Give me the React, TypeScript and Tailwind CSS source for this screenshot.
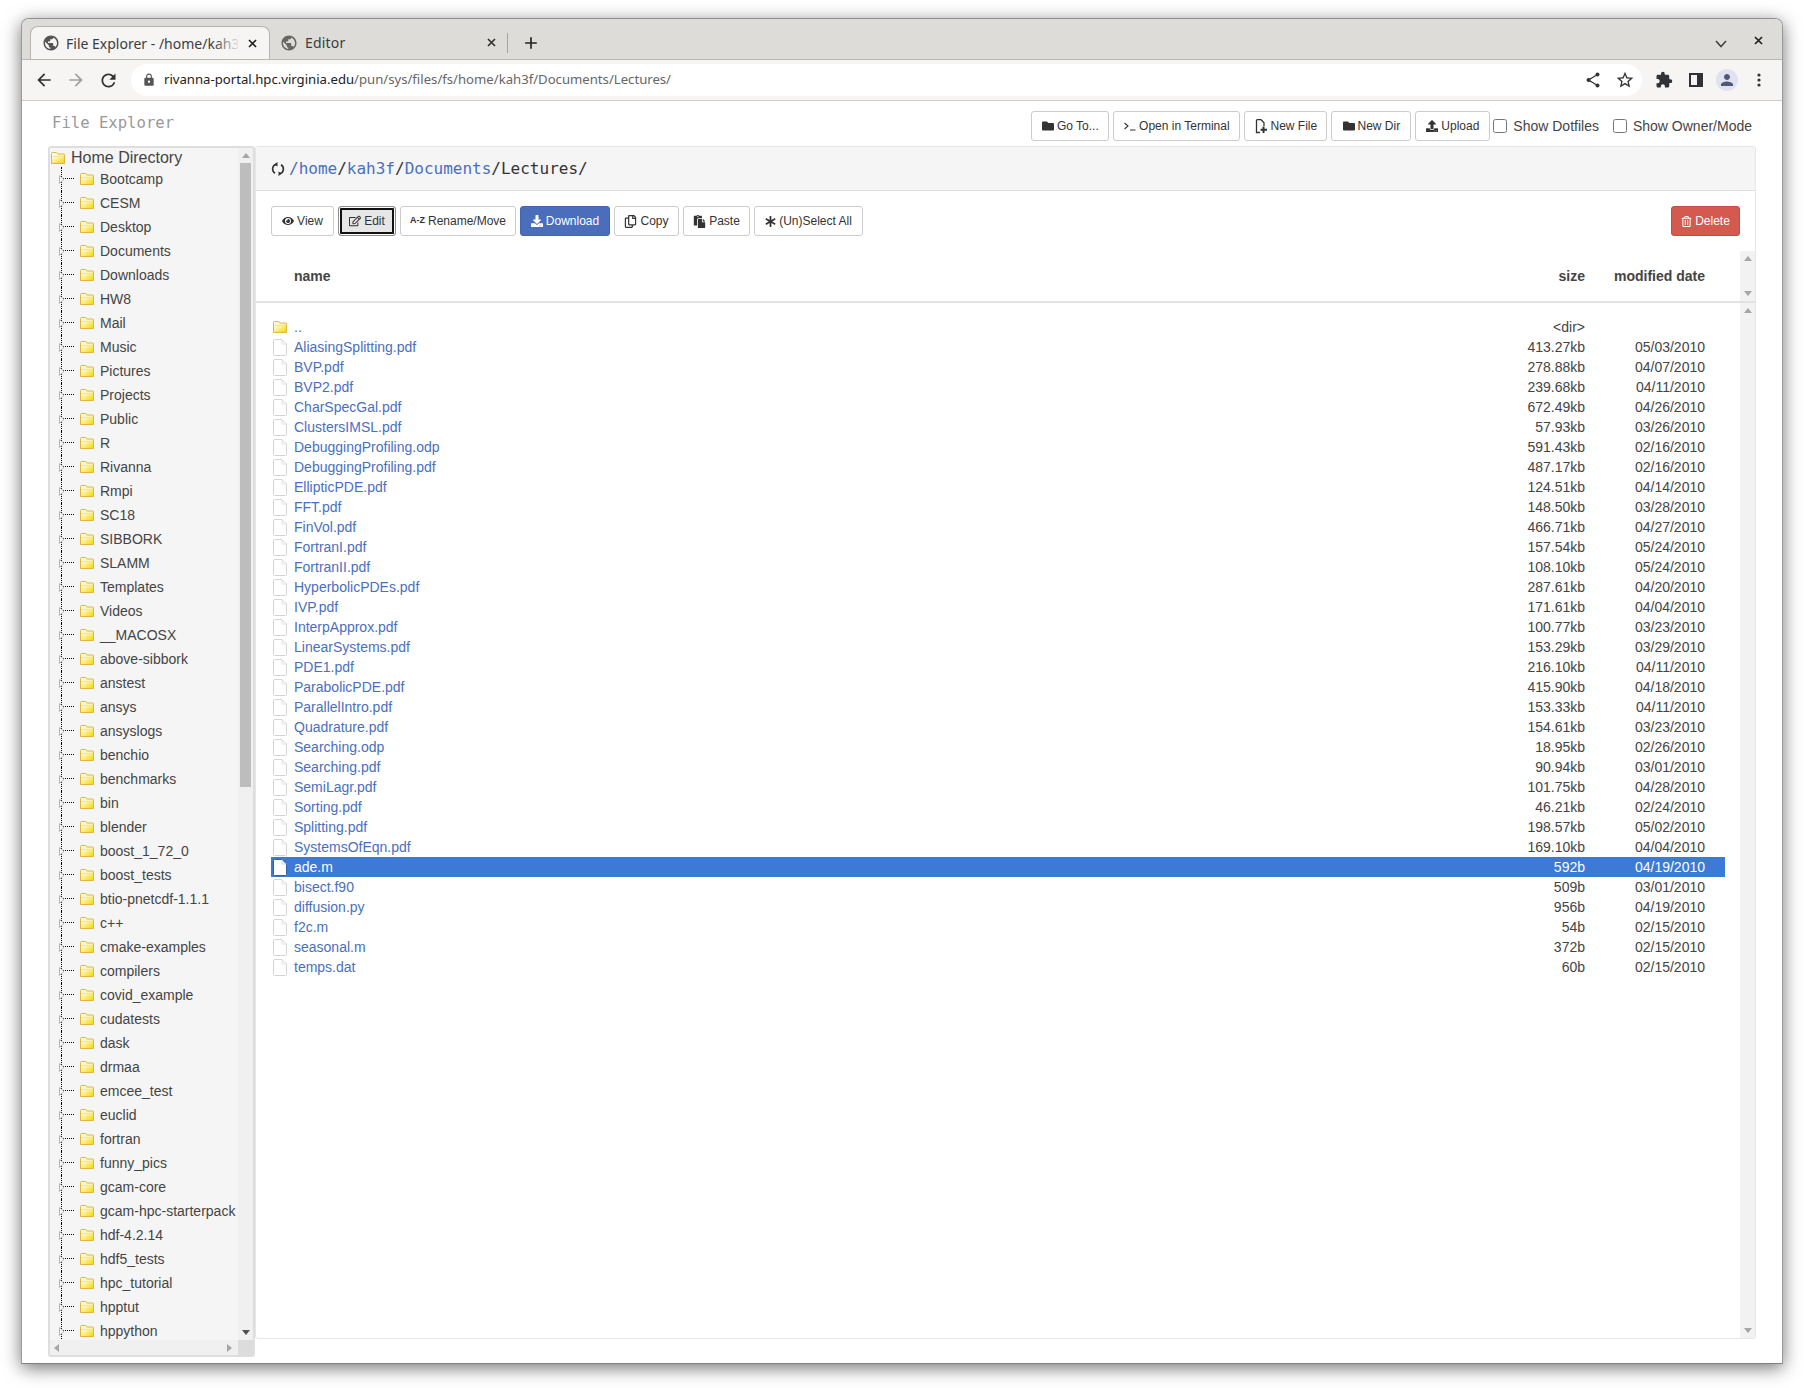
import React from "react";
import {
  FaEye,
  FaRegEdit,
  FaDownload,
  FaRegCopy,
  FaPaste,
  FaAsterisk,
  FaFolder,
  FaUpload,
  FaRegTrashAlt,
} from "react-icons/fa";
import {
  MdArrowBack,
  MdArrowForward,
  MdRefresh,
  MdLock,
  MdPublic,
  MdAdd,
  MdStarBorder,
  MdExtension,
  MdPerson,
} from "react-icons/md";

const treeItems = [
  "Bootcamp", "CESM", "Desktop", "Documents", "Downloads", "HW8", "Mail", "Music", "Pictures", "Projects",
  "Public", "R", "Rivanna", "Rmpi", "SC18", "SIBBORK", "SLAMM", "Templates", "Videos", "__MACOSX",
  "above-sibbork", "anstest", "ansys", "ansyslogs", "benchio", "benchmarks", "bin", "blender", "boost_1_72_0",
  "boost_tests", "btio-pnetcdf-1.1.1", "c++", "cmake-examples", "compilers", "covid_example", "cudatests", "dask",
  "drmaa", "emcee_test", "euclid", "fortran", "funny_pics", "gcam-core", "gcam-hpc-starterpack", "hdf-4.2.14",
  "hdf5_tests", "hpc_tutorial", "hpptut", "hppython",
];

const files = [
  ["AliasingSplitting.pdf", "413.27kb", "05/03/2010"],
  ["BVP.pdf", "278.88kb", "04/07/2010"],
  ["BVP2.pdf", "239.68kb", "04/11/2010"],
  ["CharSpecGal.pdf", "672.49kb", "04/26/2010"],
  ["ClustersIMSL.pdf", "57.93kb", "03/26/2010"],
  ["DebuggingProfiling.odp", "591.43kb", "02/16/2010"],
  ["DebuggingProfiling.pdf", "487.17kb", "02/16/2010"],
  ["EllipticPDE.pdf", "124.51kb", "04/14/2010"],
  ["FFT.pdf", "148.50kb", "03/28/2010"],
  ["FinVol.pdf", "466.71kb", "04/27/2010"],
  ["FortranI.pdf", "157.54kb", "05/24/2010"],
  ["FortranII.pdf", "108.10kb", "05/24/2010"],
  ["HyperbolicPDEs.pdf", "287.61kb", "04/20/2010"],
  ["IVP.pdf", "171.61kb", "04/04/2010"],
  ["InterpApprox.pdf", "100.77kb", "03/23/2010"],
  ["LinearSystems.pdf", "153.29kb", "03/29/2010"],
  ["PDE1.pdf", "216.10kb", "04/11/2010"],
  ["ParabolicPDE.pdf", "415.90kb", "04/18/2010"],
  ["ParallelIntro.pdf", "153.33kb", "04/11/2010"],
  ["Quadrature.pdf", "154.61kb", "03/23/2010"],
  ["Searching.odp", "18.95kb", "02/26/2010"],
  ["Searching.pdf", "90.94kb", "03/01/2010"],
  ["SemiLagr.pdf", "101.75kb", "04/28/2010"],
  ["Sorting.pdf", "46.21kb", "02/24/2010"],
  ["Splitting.pdf", "198.57kb", "05/02/2010"],
  ["SystemsOfEqn.pdf", "169.10kb", "04/04/2010"],
  ["ade.m", "592b", "04/19/2010"],
  ["bisect.f90", "509b", "03/01/2010"],
  ["diffusion.py", "956b", "04/19/2010"],
  ["f2c.m", "54b", "02/15/2010"],
  ["seasonal.m", "372b", "02/15/2010"],
  ["temps.dat", "60b", "02/15/2010"],
];

function FolderIcon() {
  return (
    <svg width="14" height="12" viewBox="0 0 14 12" className="shrink-0">
      <defs>
        <linearGradient id="fold" x1="0" y1="0" x2="0.7" y2="1">
          <stop offset="0" stopColor="#ffffff" />
          <stop offset="0.5" stopColor="#fdf6a8" />
          <stop offset="1" stopColor="#f2dc20" />
        </linearGradient>
      </defs>
      <path d="M0.5 11.5V1.5Q0.5 0.5 1.5 0.5H5.5L7 2H12.5Q13.5 2 13.5 3V11.5Z" fill="url(#fold)" stroke="#e0b445" />
      <path d="M2 4.5H12" stroke="#efe4a6" />
    </svg>
  );
}

function FileIcon({ selected }: { selected?: boolean }) {
  return (
    <svg width="14" height="17" viewBox="0 0 14 17" className="shrink-0">
      <path
        d="M0.5 1.5Q0.5 0.5 1.5 0.5H9L13.5 5V15.5Q13.5 16.5 12.5 16.5H1.5Q0.5 16.5 0.5 15.5Z"
        fill="#ffffff"
        stroke={selected ? "#2f5fa8" : "#d4d4d4"}
      />
      <path d="M9 0.5V5H13.5" fill="none" stroke={selected ? "#c9d6ea" : "#e2e2e2"} />
    </svg>
  );
}

function Arrow({ dir, color = "#a6a6a6" }: { dir: "up" | "down" | "left" | "right"; color?: string }) {
  const points = {
    up: "0,5 4,0 8,5",
    down: "0,0 8,0 4,5",
    left: "5,0 5,8 0,4",
    right: "0,0 5,4 0,8",
  }[dir];
  const vertical = dir === "up" || dir === "down";
  return (
    <svg width={vertical ? 8 : 5} height={vertical ? 5 : 8} viewBox={vertical ? "0 0 8 5" : "0 0 5 8"}>
      <polygon points={points} fill={color} />
    </svg>
  );
}

function TabClose({ color = "#222222" }: { color?: string }) {
  return (
    <svg width="9" height="9" viewBox="0 0 9 9" className="shrink-0">
      <path d="M1 1L8 8M8 1L1 8" stroke={color} strokeWidth="1.7" />
    </svg>
  );
}

function ToolButton({ width, icon, label, variant }: { width: string; icon: React.ReactNode; label: string; variant?: string }) {
  let look = "border-[#cccccc] bg-white text-[#333333]";
  if (variant === "primary") look = "border-[#4466b0] bg-[#4a6dbc] text-white";
  if (variant === "danger") look = "border-[#c9493f] bg-[#d4594e] text-white";
  if (variant === "focus") look = "border-[#8c8c8c] bg-[#e6e6e6] text-[#333333] shadow-[inset_0_0_0_1px_#fff,inset_0_0_0_3px_#111]";
  return (
    <button className={`flex h-[30px] shrink-0 items-center justify-center gap-[3px] rounded-[3px] border text-[12px] ${look} ${width}`}>
      {icon}
      <span>{label}</span>
    </button>
  );
}

function TreeRow({ name }: { name: string }) {
  return (
    <div className="relative flex h-6 items-center pl-[30px] text-[14px] text-[#444444]">
      <div className="absolute bottom-0 left-[11px] top-0 border-l border-dotted border-black" />
      <div className="absolute left-[13px] top-[11px] w-[11px] border-t border-dotted border-black" />
      <svg width="6" height="9" viewBox="0 0 6 9" className="absolute left-[9px] top-[8px]">
        <polygon points="0.5,0.5 5,4.5 0.5,8.5" fill="#f5f5f5" stroke="#b5b5b5" />
      </svg>
      <FolderIcon />
      <span className="ml-[6px] whitespace-nowrap">{name}</span>
    </div>
  );
}

function FileRow({ file, selected }: { file: string[]; selected: boolean }) {
  return (
    <div className={`flex h-5 items-center pl-[2px] text-[14px] ${selected ? "bg-[#3c7ad6] text-white" : "text-[#444444]"}`}>
      <FileIcon selected={selected} />
      <span className={`ml-[7px] flex-1 ${selected ? "" : "text-[#4a6fc0]"}`}>{file[0]}</span>
      <span className="w-[100px] text-right">{file[1]}</span>
      <span className="w-[120px] pr-0 text-right">{file[2]}</span>
      <span className="w-5" />
    </div>
  );
}

export default function App() {
  const chromeFont = "font-['Noto_Sans',sans-serif]";
  return (
    <div className="h-[1388px] w-[1804px] overflow-hidden bg-white pl-[21px] pt-[18px] font-['Liberation_Sans',Arial,sans-serif]">
      <div className="flex h-[1346px] w-[1762px] flex-col overflow-hidden rounded-t-lg border-x border-b border-t border-x-[#9a9a9a] border-b-[#808080] border-t-[#8f8f8f] bg-white shadow-[0_4px_18px_rgba(0,0,0,0.55)]">
        {/* tab strip */}
        <div className={`flex h-[41px] shrink-0 items-end border-b border-[#bab6b0] bg-[#dedcd8] pl-2 text-[14px] text-[#3c3c3c] ${chromeFont}`}>
          <div className="relative flex h-[33px] w-[240px] items-center rounded-t-lg border-x border-t border-[#b8b5b0] bg-[#f6f5f4] pl-[11px]">
            <MdPublic size={18} className="shrink-0 text-[#555555]" />
            <span className="ml-[6px] w-[172px] overflow-hidden whitespace-nowrap">File Explorer - /home/kah3f</span>
            <div className="absolute left-[182px] top-0 h-full w-[28px] bg-gradient-to-r from-transparent to-[#f6f5f4]" />
            <span className="ml-[10px]"><TabClose /></span>
          </div>
          <div className="flex h-[33px] w-[238px] items-center pl-[10px]">
            <MdPublic size={18} className="shrink-0 text-[#666666]" />
            <span className="ml-[7px] flex-1 tracking-[0.2px]">Editor</span>
            <span className="mr-[11px]"><TabClose color="#333333" /></span>
            <div className="h-5 border-l border-[#a8a5a0]" />
          </div>
          <div className="flex h-[33px] items-center pl-[13px]">
            <MdAdd size={20} className="text-[#222222]" />
          </div>
          <div className="flex h-[33px] flex-1 items-center justify-end pr-[19px]">
            <svg width="12" height="8" viewBox="0 0 12 8" className="mr-[27px] mt-[3px]">
              <path d="M1 1L6 6.5L11 1" fill="none" stroke="#444444" strokeWidth="1.6" />
            </svg>
            <span className="mb-[5px]"><TabClose /></span>
          </div>
        </div>
        {/* address bar */}
        <div className={`flex h-[41px] shrink-0 items-center border-b border-[#cfcbc5] bg-[#f6f5f4] text-[13.15px] ${chromeFont}`}>
          <MdArrowBack size={20} className="ml-[12px] text-[#333333]" />
          <MdArrowForward size={20} className="ml-3 text-[#a0a0a0]" />
          <MdRefresh size={21} className="ml-3 text-[#333333]" />
          <div className="ml-[12px] flex h-8 w-[1511px] items-center rounded-full bg-white pl-[11px]">
            <MdLock size={14} className="text-[#555555]" />
            <span className="ml-[8px] flex-1 text-[#222222]">
              rivanna-portal.hpc.virginia.edu<span className="text-[#666666]">/pun/sys/files/fs/home/kah3f/Documents/Lectures/</span>
            </span>
            <svg width="14" height="16" viewBox="0 0 14 16" className="text-[#333333]">
              <path d="M11.5 2.5L2.5 8L11.5 13.5" fill="none" stroke="currentColor" strokeWidth="1.3" />
              <circle cx="11.5" cy="2.5" r="2" fill="currentColor" />
              <circle cx="2.5" cy="8" r="2" fill="currentColor" />
              <circle cx="11.5" cy="13.5" r="2" fill="currentColor" />
            </svg>
            <MdStarBorder size={20} className="ml-[15px] mr-[7px] text-[#333333]" />
          </div>
          <MdExtension size={18} className="ml-[13px] text-[#2f3338]" />
          <svg width="14" height="14" viewBox="0 0 14 14" className="ml-[16px]">
            <path d="M0 0H14V14H0ZM2 2V12H8V2Z" fill="#2f3338" fillRule="evenodd" />
          </svg>
          <div className="ml-[13px] flex h-[22px] w-[22px] items-center justify-center rounded-full bg-[#e0e2ee]">
            <MdPerson size={18} className="text-[#4f5878]" />
          </div>
          <svg width="4" height="14" viewBox="0 0 4 14" className="ml-[19px] text-[#333333]">
            <circle cx="2" cy="2" r="1.6" fill="currentColor" />
            <circle cx="2" cy="7" r="1.6" fill="currentColor" />
            <circle cx="2" cy="12" r="1.6" fill="currentColor" />
          </svg>
        </div>
        {/* page */}
        <div className="flex min-h-0 flex-1 flex-col px-[26px]">
          <div className="flex h-[45px] shrink-0 items-center">
            <span className="ml-[4px] flex-1 font-['DejaVu_Sans_Mono',monospace] text-[15.6px] text-[#999999]">File Explorer</span>
            <div className="mt-[5px] flex items-center">
              <div className="flex gap-[4px]">
                <ToolButton width="w-[78px]" icon={<FaFolder size={12} />} label="Go To..." />
                <ToolButton
                  width="w-[127px]"
                  icon={
                    <svg width="12" height="9" viewBox="0 0 12 9">
                      <path d="M0.5 1L4 4L0.5 7M6 8H11.5" fill="none" stroke="#333333" strokeWidth="1.1" />
                    </svg>
                  }
                  label="Open in Terminal"
                />
                <ToolButton
                  width="w-[83px]"
                  icon={
                    <svg width="13" height="15" viewBox="0 0 13 15">
                      <path d="M5 13.5H1.5V1.5Q1.5 0.7 2.3 0.7H6L9 3.7V7" fill="none" stroke="#333333" strokeWidth="1.3" />
                      <path d="M8.5 7.5V14M5.5 10.7H12" stroke="#333333" strokeWidth="2" />
                    </svg>
                  }
                  label="New File"
                />
                <ToolButton width="w-[80px]" icon={<FaFolder size={12} />} label="New Dir" />
                <ToolButton width="w-[75px]" icon={<FaUpload size={12} />} label="Upload" />
              </div>
              <input type="checkbox" readOnly className="ml-[3px] h-[14px] w-[14px]" />
              <span className="ml-[6px] text-[14px] text-[#444444]">Show Dotfiles</span>
              <input type="checkbox" readOnly className="ml-[14px] h-[14px] w-[14px]" />
              <span className="ml-[6px] mr-[4px] text-[14px] text-[#444444]">Show Owner/Mode</span>
            </div>
          </div>
          <div className="flex min-h-0 flex-1 items-start pb-[6px]">
            {/* directory tree */}
            <div className="flex h-full w-[207px] shrink-0 flex-col overflow-hidden rounded-[3px] border-2 border-[#dedede] bg-[#f5f5f5]">
              <div className="flex min-h-0 flex-1">
                <div className="min-w-0 flex-1 overflow-hidden">
                  <div className="flex h-[19px] items-center pl-[1px] text-[16px] text-[#444444]">
                    <FolderIcon />
                    <span className="ml-[6px]">Home Directory</span>
                  </div>
                  {treeItems.map((item) => (
                    <TreeRow key={item} name={item} />
                  ))}
                </div>
                <div className="flex w-[15px] shrink-0 flex-col items-center bg-[#f0f0f0]">
                  <div className="flex h-[15px] items-center"><Arrow dir="up" /></div>
                  <div className="h-[624px] w-[11px] bg-[#bdbdbd]" />
                  <div className="flex-1" />
                  <div className="flex h-[15px] items-center"><Arrow dir="down" color="#505050" /></div>
                </div>
              </div>
              <div className="flex h-[15px] shrink-0 items-center bg-[#f0f0f0]">
                <div className="ml-[4px]"><Arrow dir="left" /></div>
                <div className="flex-1" />
                <div className="mr-[6px]"><Arrow dir="right" /></div>
                <div className="h-full w-[15px] bg-[#dcdcdc]" />
              </div>
            </div>
            {/* file listing */}
            <div className="flex h-[1193px] min-w-0 flex-1 flex-col overflow-hidden rounded-[3px] border border-[#e6e6e6]">
              <div className="flex h-[44px] shrink-0 items-center border-b border-[#dedede] bg-[#f5f5f5] pl-[15px] font-['DejaVu_Sans_Mono',monospace] text-[16px] text-[#333333]">
                <svg width="14" height="14" viewBox="0 0 14 14" className="mr-[4px] shrink-0">
                  <path d="M5 2.2A5 5 0 0 0 4 11.2M9 11.8A5 5 0 0 0 10 2.8" fill="none" stroke="#333333" strokeWidth="1.6" />
                  <path d="M6.5 0L6.5 4.5L3 2.5ZM7.5 14L7.5 9.5L11 11.5Z" fill="#333333" />
                </svg>
                <span className="text-[#4a6fc0]">/home</span>/<span className="text-[#4a6fc0]">kah3f</span>/<span className="text-[#4a6fc0]">Documents</span>/Lectures/
              </div>
              <div className="flex h-[60px] shrink-0 items-start gap-[4px] px-[15px] pt-[15px]">
                <ToolButton width="w-[63px]" icon={<FaEye size={12} />} label="View" />
                <ToolButton width="w-[58px]" variant="focus" icon={<FaRegEdit size={12} />} label="Edit" />
                <ToolButton width="w-[116px]" icon={<span className="text-[9px] font-bold">A-Z</span>} label="Rename/Move" />
                <ToolButton width="w-[90px]" variant="primary" icon={<FaDownload size={12} />} label="Download" />
                <ToolButton width="w-[65px]" icon={<FaRegCopy size={13} />} label="Copy" />
                <ToolButton width="w-[67px]" icon={<FaPaste size={13} />} label="Paste" />
                <ToolButton width="w-[109px]" icon={<FaAsterisk size={11} />} label="(Un)Select All" />
                <div className="flex-1" />
                <ToolButton width="w-[69px]" variant="danger" icon={<FaRegTrashAlt size={11} />} label="Delete" />
              </div>
              <div className="flex h-[52px] shrink-0 border-b-2 border-[#e2e2e2]">
                <div className="flex flex-1 items-center pl-[38px] pr-[35px] text-[14px] font-bold text-[#444444]">
                  <span className="flex-1">name</span>
                  <span className="w-[100px] text-right">size</span>
                  <span className="w-[120px] text-right">modified date</span>
                </div>
                <div className="flex w-[15px] flex-col items-center justify-between bg-[#f2f2f2] py-[5px]">
                  <Arrow dir="up" />
                  <Arrow dir="down" />
                </div>
              </div>
              <div className="flex min-h-0 flex-1">
                <div className="min-w-0 flex-1 px-[15px] pt-[14px]">
                  <div className="flex h-5 items-center pl-[2px] text-[14px] text-[#444444]">
                    <FolderIcon />
                    <span className="ml-[7px] flex-1 text-[#4a6fc0]">..</span>
                    <span className="w-[100px] text-right">&lt;dir&gt;</span>
                    <span className="w-[120px]" />
                    <span className="w-5" />
                  </div>
                  {files.map((file) => (
                    <FileRow key={file[0]} file={file} selected={file[0] === "ade.m"} />
                  ))}
                </div>
                <div className="flex w-[15px] shrink-0 flex-col items-center justify-between bg-[#f2f2f2] py-[5px]">
                  <Arrow dir="up" />
                  <Arrow dir="down" />
                </div>
              </div>
            </div>
          </div>
        </div>
      </div>
    </div>
  );
}
